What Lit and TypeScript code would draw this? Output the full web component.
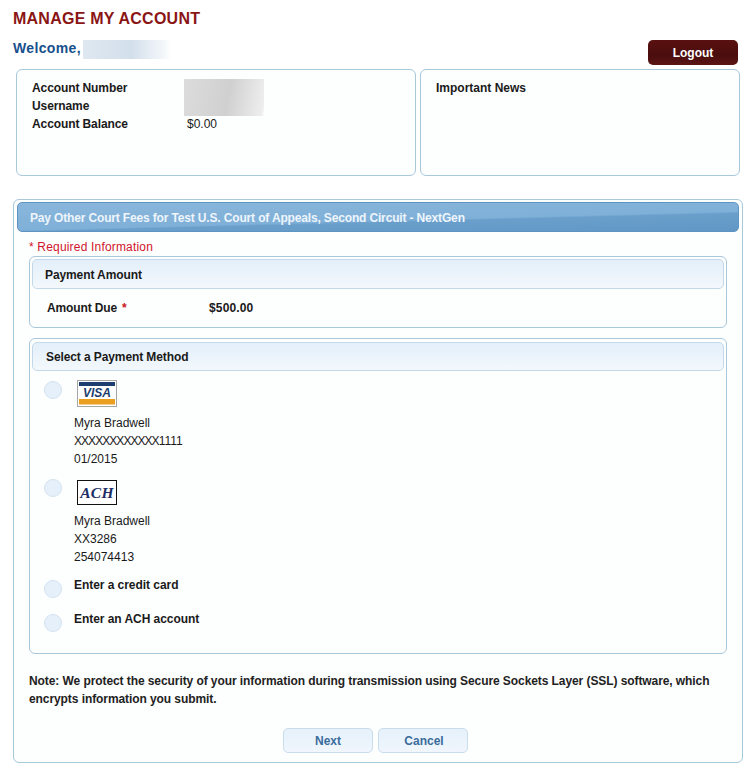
import { LitElement, html, css } from "lit";
import { customElement } from "lit/decorators.js";

@customElement("app-root")
export class AppRoot extends LitElement {
  static styles = css`
    :host { display: block; width: 754px; height: 766px; overflow: hidden; background: #fff; font-family: "Liberation Sans", Arial, sans-serif; font-size: 12px; color: #1a1a1a; box-sizing: border-box; padding: 10px 11px 0 13px; }
    * { box-sizing: border-box; }
    h1 { margin: 0; font-size: 16px; line-height: 18px; font-weight: bold; color: #8a1515; letter-spacing: 0.24px; }
    .welcome-row { display: flex; justify-content: space-between; margin-top: 11px; height: 26px; padding-right: 5px; }
    .welcome { display: flex; align-items: flex-start; color: #17508c; font-size: 14px; font-weight: bold; line-height: 18px; height: 20px; letter-spacing: 0.35px; }
    .blur-name { width: 88px; height: 19px; margin: 1px 0 0 2px; background: linear-gradient(90deg, #dfe8f1 0%, #d3dfeb 55%, #f4f7fa 92%, #fff 100%); }
    .logout { width: 90px; height: 25px; margin: 1px 0 0; border-radius: 5px; border: none; background: linear-gradient(#5a1010, #4a0d0d 60%, #5c1414); color: #fff; font: bold 12px/23px "Liberation Sans", Arial, sans-serif; padding: 2px 0 0; }
    .top { display: flex; gap: 4px; margin: 4px 0 0 3px; }
    .card { height: 107px; border: 1px solid #a9c8dc; border-radius: 6px; background: #fdfefe; padding: 9px 15px; font-weight: bold; line-height: 18px; }
    .card.a { width: 400px; }
    .card.b { width: 320px; }
    .acct { display: grid; grid-template-columns: 152px 1fr; position: relative; letter-spacing: -0.1px; }
    .acct .v { font-weight: normal; padding-left: 3px; letter-spacing: 0; }
    .smudge { position: absolute; left: 152px; top: 0; width: 80px; height: 37px; background: linear-gradient(100deg, #dcdcdc, #d0d0d0 55%, #eee 97%, #fff); }
    .panel { margin-top: 23px; width: 730px; height: 564px; border: 1px solid #a9c8dc; border-radius: 6px; background: #fdfefe; padding: 2px 3px 0; }
    .panel-head { height: 30px; border: 1px solid #5d94c1; border-radius: 5px; background: linear-gradient(178.5deg, #8ab6db 0%, #7fb0d8 58%, #6a9fcb 62%, #6097c5 100%); color: #eef5fb; font-weight: bold; line-height: 31px; padding-left: 12px; letter-spacing: -0.155px; }
    .req { margin: 8px 0 0 12px; color: #d0142c; line-height: 14px; height: 16px; letter-spacing: 0.18px; }
    .box { margin-left: 12px; width: 698px; border: 1px solid #a9c8dc; border-radius: 6px; background: #fdfefe; padding: 2px; }
    .box-head { height: 30px; border: 1px solid #c3d9e9; border-radius: 5px; background: linear-gradient(#e3effa, #f3f8fc); font-weight: bold; line-height: 30px; padding-left: 12px; width: 692px; letter-spacing: -0.1px; }
    .box.amount { height: 72px; }
    .due { display: grid; grid-template-columns: 162px 1fr; padding: 10px 0 0 15px; font-weight: bold; line-height: 18px; }
    .due-label { display: flex; gap: 5px; letter-spacing: -0.14px; }
    .due-value { letter-spacing: 0.15px; }
    .star { color: #c81420; }
    .box.method { height: 316px; margin-top: 10px; padding-top: 2px; }
    .box.method .box-head { margin-top: 1px; height: 29px; line-height: 29px; padding-left: 13px; }
    .opt { display: flex; margin-left: 12px; }
    .opt.first { margin-top: 9px; }
    .opt.second { margin-top: 11px; }
    .opt.enter-a { margin-top: 10px; }
    .opt.enter-b { margin-top: 12px; }
    .radio { width: 18px; height: 18px; border-radius: 50%; border: 1px solid #d3e2f0; background: #e6f0fa; flex: none; margin: 0 12px 0 0; }
    .first .radio { margin-top: 1px; }
    .enter-a .radio, .enter-b .radio { margin-top: 4px; }
    .lines { line-height: 18px; }
    .logo { display: block; width: 40px; margin: 0 0 7px 3px; }
    .second .logo { margin-top: 1px; }
    .xs { letter-spacing: -0.95px; }
    .bold { font-weight: bold; line-height: 18px; letter-spacing: -0.05px; }
    .note { margin: 18px 0 0 12px; width: 700px; font-weight: bold; line-height: 18px; color: #222; letter-spacing: -0.08px; }
    .btns { display: flex; justify-content: center; gap: 5px; margin-top: 20px; padding-right: 5px; }
    .btn { width: 90px; height: 25px; border: 1px solid #c9dded; border-radius: 5px; background: linear-gradient(#e6f1fb, #f0f6fc); color: #3a6c9c; font: bold 12px/23px "Liberation Sans", Arial, sans-serif; padding: 1px 0 0; }
    .btn.cancel { padding-left: 2px; }
  `;

  render() {
    return html`
      <h1>MANAGE MY ACCOUNT</h1>
      <div class="welcome-row">
        <div class="welcome">Welcome,<div class="blur-name"></div></div>
        <button class="logout">Logout</button>
      </div>
      <div class="top">
        <div class="card a">
          <div class="acct">
            <div>Account Number</div><div class="v"></div>
            <div>Username</div><div class="v"></div>
            <div>Account Balance</div><div class="v">$0.00</div>
            <div class="smudge"></div>
          </div>
        </div>
        <div class="card b">Important News</div>
      </div>
      <div class="panel">
        <div class="panel-head">Pay Other Court Fees for Test U.S. Court of Appeals, Second Circuit - NextGen</div>
        <div class="req">* Required Information</div>
        <div class="box amount">
          <div class="box-head">Payment Amount</div>
          <div class="due"><div class="due-label"><span>Amount Due</span><span class="star">*</span></div><div class="due-value">$500.00</div></div>
        </div>
        <div class="box method">
          <div class="box-head">Select a Payment Method</div>
          <div class="opt first">
            <div class="radio"></div>
            <div class="lines">
              <svg class="logo" viewBox="0 0 40 27" height="27">
                <rect x="0.5" y="0.5" width="39" height="26" fill="#fff" stroke="#a6a6a6"/>
                <rect x="2" y="2" width="36" height="4" fill="#1c3d6e"/>
                <rect x="2" y="19" width="36" height="5.5" fill="#eb9f20"/>
                <text x="20" y="17" text-anchor="middle" font-family="Liberation Sans" font-size="12" font-weight="bold" font-style="italic" fill="#1c3d6e">VISA</text>
              </svg>
              Myra Bradwell<br><span class="xs">XXXXXXXXXXXX</span>1111<br>01/2015
            </div>
          </div>
          <div class="opt second">
            <div class="radio"></div>
            <div class="lines">
              <svg class="logo" viewBox="0 0 40 25" height="25">
                <rect x="0.5" y="0.5" width="39" height="24" fill="#fff" stroke="#111"/>
                <text x="20" y="17.5" text-anchor="middle" font-family="Liberation Serif" font-size="15.5" font-weight="bold" font-style="italic" letter-spacing="0.3" fill="#1c2f66">ACH</text>
              </svg>
              Myra Bradwell<br>XX3286<br>254074413
            </div>
          </div>
          <div class="opt enter-a">
            <div class="radio"></div>
            <div class="bold">Enter a credit card</div>
          </div>
          <div class="opt enter-b">
            <div class="radio"></div>
            <div class="bold">Enter an ACH account</div>
          </div>
        </div>
        <div class="note">Note: We protect the security of your information during transmission using Secure Sockets Layer (SSL) software, which encrypts information you submit.</div>
        <div class="btns"><button class="btn">Next</button><button class="btn cancel">Cancel</button></div>
      </div>
    `;
  }
}
